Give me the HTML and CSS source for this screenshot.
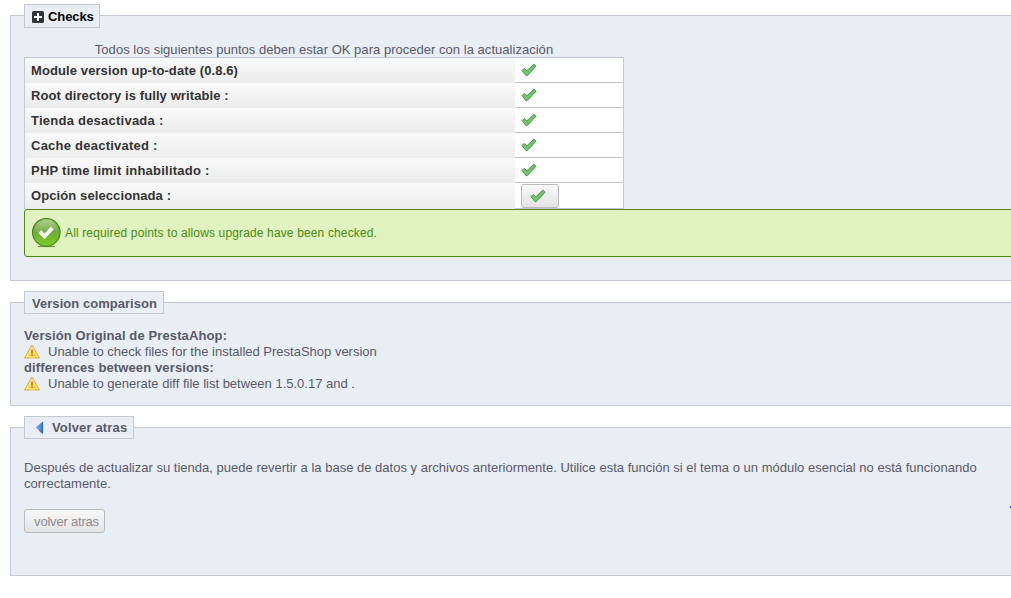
FILE: index.html
```html
<!DOCTYPE html>
<html lang="es">
<head>
    <meta charset="UTF-8">
    <title>Checks</title>
    <link rel="stylesheet" href="styles.css">
</head>
<body>
    <svg class="defs" width="0" height="0">
        <defs>
            <linearGradient id="checkFill" x1="0" y1="0" x2="0" y2="1">
                <stop offset="0" stop-color="#79b878"/>
                <stop offset="1" stop-color="#69cf62"/>
            </linearGradient>
            <linearGradient id="okFill" x1="0" y1="0" x2="0" y2="1">
                <stop offset="0" stop-color="#a6cd82"/>
                <stop offset="0.4" stop-color="#69a83a"/>
                <stop offset="1" stop-color="#80cc28"/>
            </linearGradient>
            <linearGradient id="warnFill" x1="0" y1="0" x2="0" y2="1">
                <stop offset="0" stop-color="#fff3a8"/>
                <stop offset="1" stop-color="#fbc928"/>
            </linearGradient>
            <linearGradient id="arrowFill" x1="0" y1="0" x2="1" y2="0">
                <stop offset="0" stop-color="#78b4ea"/>
                <stop offset="1" stop-color="#3d79c8"/>
            </linearGradient>
        </defs>
        <symbol id="check" viewBox="0 0 16 16">
            <path d="M1 8.6L3.2 6.4L5.9 8.8L12.8 2.1L15.1 4.2L6.2 13.7H5Z" fill="url(#checkFill)" stroke="#4c8c52" stroke-width="0.9" stroke-linejoin="round"/>
        </symbol>
        <symbol id="warning" viewBox="0 0 16 16">
            <path d="M8 1.2L15.3 13.9H0.7Z" fill="url(#warnFill)" stroke="#e2b348" stroke-width="1.2" stroke-linejoin="round"/>
            <path d="M8 3.4L13.5 12.8H2.5Z" fill="none" stroke="#fff2b5" stroke-width="0.8"/>
            <path d="M8 5.6V9.7M8 10.8V12.1" fill="none" stroke="#b67a16" stroke-width="1.6"/>
        </symbol>
    </svg>

    <fieldset class="panel checks">
        <legend class="toggle">
            <span>
                <svg class="plus" width="12" height="12" viewBox="0 0 12 12">
                    <rect width="12" height="12" rx="1.5" fill="#34353b"/>
                    <path d="M6 2V10M2 6H10" stroke="#fff" stroke-width="2"/>
                </svg>Checks
            </span>
        </legend>
        <table class="check-table">
            <caption>Todos los siguientes puntos deben estar OK para proceder con la actualización</caption>
            <tr>
                <th>Module version up-to-date (0.8.6)</th>
                <td><svg class="icon"><use href="#check"/></svg></td>
            </tr>
            <tr>
                <th>Root directory is fully writable :</th>
                <td><svg class="icon"><use href="#check"/></svg></td>
            </tr>
            <tr>
                <th class="wide">Tienda desactivada :</th>
                <td><svg class="icon"><use href="#check"/></svg></td>
            </tr>
            <tr>
                <th class="wide">Cache deactivated :</th>
                <td><svg class="icon"><use href="#check"/></svg></td>
            </tr>
            <tr>
                <th class="wide">PHP time limit inhabilitado :</th>
                <td><svg class="icon"><use href="#check"/></svg></td>
            </tr>
            <tr class="last">
                <th>Opción seleccionada :</th>
                <td><a class="button"><svg class="icon"><use href="#check"/></svg></a></td>
            </tr>
        </table>
        <div class="conf">
            <svg width="30" height="30" viewBox="0 0 30 30">
                <path d="M6 28.5H23" stroke="#6f9c45" stroke-width="1.2"/>
                <circle cx="14.3" cy="14.3" r="13.8" fill="url(#okFill)" stroke="#487e20" stroke-width="1.1"/>
                <path d="M2.8 13.5C3.3 -1.5 25.3 -1.5 25.8 13.5C18.3 9.5 10.3 15.5 2.8 13.5Z" fill="#fff" opacity="0.15"/>
                <path d="M7.8 13.7L12.5 18.2L20.3 10.1" fill="none" stroke="#fff" stroke-width="3.8"/>
            </svg>
            <span>All required points to allows upgrade have been checked.</span>
        </div>
    </fieldset>

    <fieldset class="panel versions">
        <legend>Version comparison</legend>
        <b>Versión Original de PrestaAhop:</b>
        <div class="line"><svg class="icon"><use href="#warning"/></svg><span>Unable to check files for the installed PrestaShop version</span></div>
        <b>differences between versions:</b>
        <div class="line"><svg class="icon"><use href="#warning"/></svg><span>Unable to generate diff file list between 1.5.0.17 and .</span></div>
    </fieldset>

    <fieldset class="panel rollback">
        <legend>
            <svg class="back" width="16" height="16" viewBox="0 0 16 16">
                <path d="M3.6 7.5L10.8 1.4V13.6Z" fill="url(#arrowFill)"/>
                <path d="M10.6 2V13.4L7.2 10.5" fill="none" stroke="#2d5fae" stroke-width="0.9"/>
            </svg>Volver atras
        </legend>
        <p>Después de actualizar su tienda, puede revertir a la base de datos y archivos anteriormente. Utilice esta función si el tema o un módulo esencial no está funcionando correctamente.</p>
        <button class="button" disabled>volver atras</button>
        <span class="marker"></span>
    </fieldset>
</body>
</html>
```
FILE: styles.css
```css
body {
    margin: 0;
    padding: 4px 0 0 10px;
    height: 594px;
    box-sizing: border-box;
    overflow: hidden;
    background-color: #fff;
    color: #585a69;
    font: 13px/16px "Liberation Sans", Arial, sans-serif;
}
.defs {
    position: absolute;
}
.panel {
    position: relative;
    box-sizing: border-box;
    width: 1020px;
    margin: 0;
    padding: 14px 0 0 13px;
    border: 1px solid #c6c9d3;
    background-color: #e9edf4;
}
.checks {
    height: 277px;
}
.versions {
    height: 115px;
    margin-top: 10px;
}
.rollback {
    height: 160px;
    margin-top: 10px;
}
legend, .toggle span {
    display: flex;
    align-items: center;
    box-sizing: border-box;
    height: 23px;
    padding: 1px 6px 0 7px;
    border: 1px solid #c6c9d3;
    background-color: #e9edf4;
    font-weight: bold;
    letter-spacing: 0.04px;
}
.versions legend {
    padding-top: 2px;
}
.rollback legend {
    width: 110px;
    padding-right: 0;
    letter-spacing: 0.15px;
}
.toggle {
    display: block;
    padding: 0;
    border: 0;
    color: #000;
}
.toggle span {
    width: 76px;
    height: 24px;
    padding-right: 0;
    letter-spacing: -0.1px;
}
.plus {
    flex: none;
    margin-right: 4px;
}
.back {
    flex: none;
    margin-right: 4px;
}
.icon {
    display: block;
    width: 16px;
    height: 16px;
}
.check-table {
    width: 600px;
    border-spacing: 0;
    table-layout: fixed;
    border: 1px solid #c6c9d3;
    border-bottom: 0;
    color: #333;
}
.check-table caption {
    padding-top: 2px;
    color: #585a69;
    line-height: 14px;
    letter-spacing: 0.03px;
}
.check-table th {
    box-sizing: border-box;
    width: 490px;
    height: 25px;
    padding: 0 6px;
    background: linear-gradient(#f9f9f9, #ececec);
    text-align: left;
    letter-spacing: 0.1px;
}
.check-table th.wide {
    letter-spacing: 0.24px;
}
.check-table td {
    box-sizing: border-box;
    height: 25px;
    padding: 0 6px;
    border-bottom: 1px solid #c6c6c6;
    background-color: #fff;
}
.check-table .last th {
    height: 26px;
    padding-bottom: 1px;
}
.check-table .last td {
    height: 26px;
    padding-top: 1px;
}
.button {
    display: flex;
    align-items: center;
    justify-content: center;
    box-sizing: border-box;
    width: 38px;
    height: 24px;
    padding: 0 4px 1px 0;
    border: 1px solid #bbb;
    border-radius: 3px;
    background: linear-gradient(#f9f9f9, #e3e3e3);
}
.conf {
    display: flex;
    align-items: center;
    box-sizing: border-box;
    height: 48px;
    padding-left: 7px;
    border: 1px solid #4f8a10;
    border-radius: 3px;
    background-color: #dff2bf;
    color: #4f8a10;
    font-size: 12px;
    letter-spacing: 0.14px;
}
.conf span {
    margin-left: 3px;
}
.versions b {
    display: block;
    letter-spacing: 0.12px;
}
.line {
    display: flex;
}
.line span {
    margin-left: 8px;
}
.rollback p {
    width: 970px;
    margin: 7px 0 17px;
    letter-spacing: 0.01px;
}
.rollback .button {
    width: 81px;
    padding: 1px 0 0 4px;
    color: #8c8c8c;
    font: 13px "Liberation Sans", Arial, sans-serif;
    letter-spacing: -0.2px;
}
.marker {
    position: absolute;
    top: 67px;
    left: 999px;
    width: 2px;
    height: 2px;
    background-color: #3448c0;
}
```
